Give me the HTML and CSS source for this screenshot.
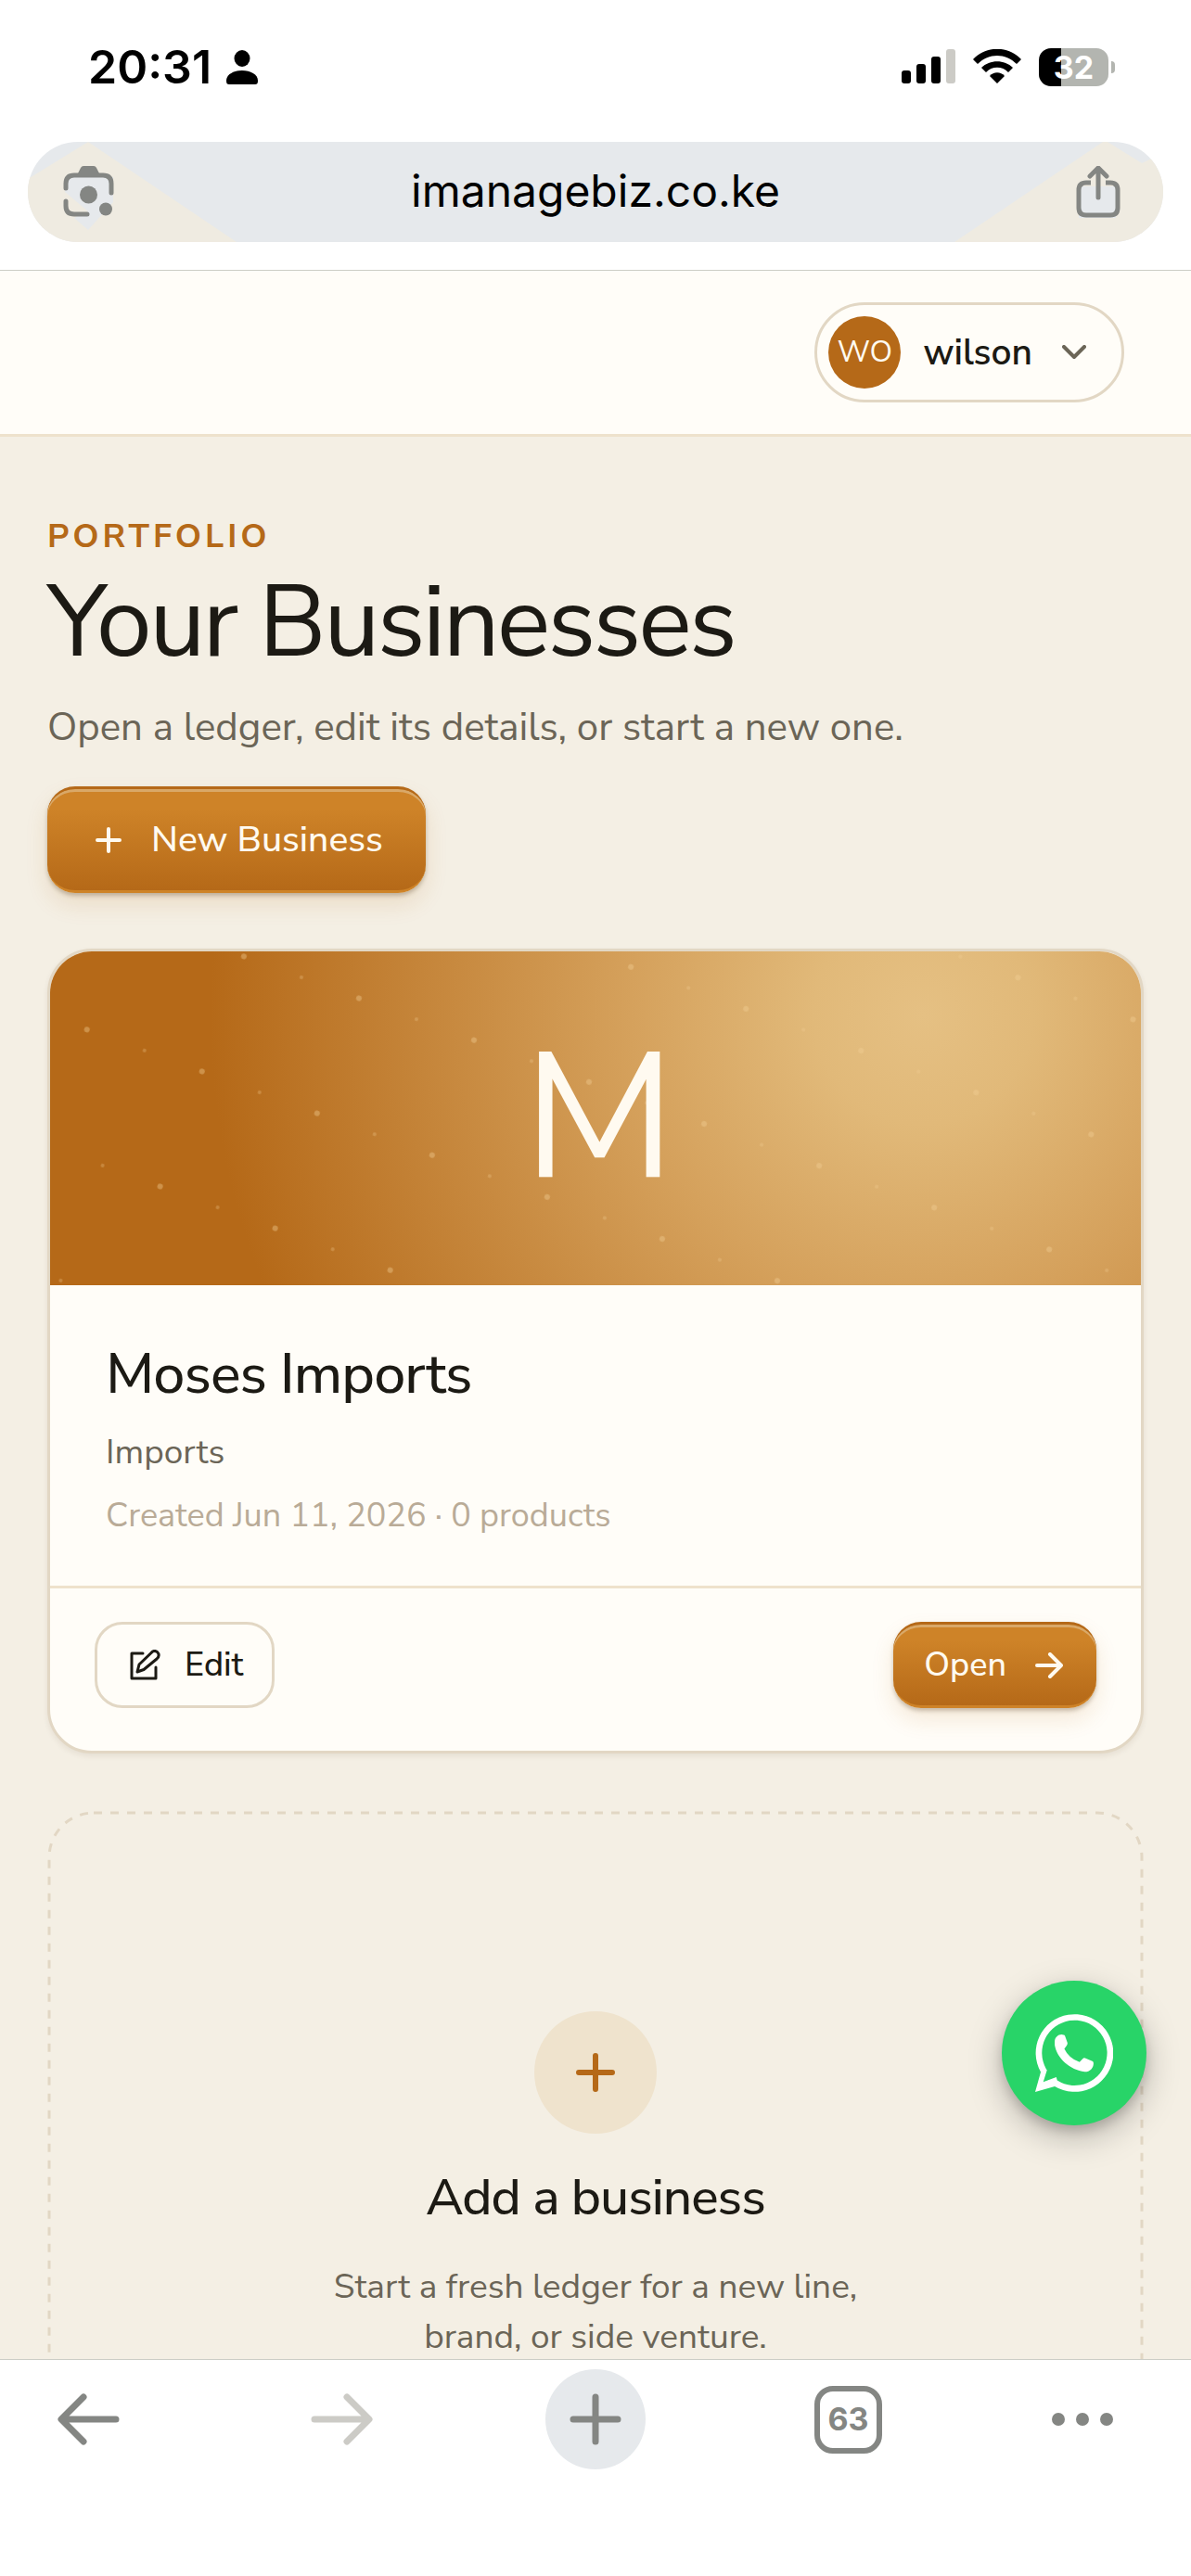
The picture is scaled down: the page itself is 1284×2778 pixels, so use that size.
FILE: index.html
```html
<!DOCTYPE html>
<html lang="en">
<head>
    <meta charset="UTF-8">
    <meta name="viewport" content="width=device-width, initial-scale=1.0">
    <title>Your Businesses</title>
    <link rel="stylesheet" href="styles.css">
</head>
<body>
    <header class="browser-top">
        <div class="status-bar">
            <div class="status-left">
                <span class="clock">20:31</span>
                <svg class="person" viewBox="0 0 34 37" aria-hidden="true">
                    <ellipse cx="17" cy="9" rx="8.5" ry="9"/>
                    <path d="M0 33C0 26 8 22 17 22s17 4 17 11c0 3-1 4-3 4H3c-2 0-3-1-3-4z"/>
                </svg>
            </div>
            <div class="status-right">
                <svg class="signal" viewBox="0 0 58 38" aria-hidden="true">
                    <rect x="0" y="23" width="10" height="14" rx="3"/>
                    <rect x="16" y="16" width="10" height="21" rx="3"/>
                    <rect x="32" y="8" width="10" height="29" rx="3"/>
                    <rect x="48" y="0" width="10" height="37" rx="3" fill="#cccbc6"/>
                </svg>
                <svg class="wifi" viewBox="0 0 52 38" aria-hidden="true">
                    <path d="M0 11C14-4 38-4 52 11l-5 5C35 4 17 4 5 16z"/>
                    <path d="M9 20c9-9 25-9 34 0l-5 5c-6-7-18-7-24 0z"/>
                    <path d="M18 29c4-5 12-5 16 0l-8 8z"/>
                </svg>
                <div class="battery"><span class="battery-level">32</span></div>
            </div>
        </div>
        <div class="url-bar">
            <svg class="tint tint-left" viewBox="0 0 225 108" aria-hidden="true">
                <path d="M65 0L0 40V108H225z"/>
                <path class="tint-gap" d="M40 38H92V65L65 95L50 82L65 75L40 54z"/>
            </svg>
            <svg class="tint tint-right" viewBox="0 0 225 108" aria-hidden="true">
                <path d="M160 0L0 108H225V12L202 23L165 0z"/>
                <path class="tint-gap" d="M134 48H174V82H134z"/>
            </svg>
            <button class="icon-btn" type="button" aria-label="Search by camera">
                <svg class="lens" viewBox="0 0 56 56">
                    <path d="M3 24V19Q3 10 12 10H43Q52 10 52 19V29M3 38V43Q3 52 12 52H26" fill="none" stroke="#848683" stroke-width="5" stroke-linecap="round"/>
                    <path d="M15 10L19 2Q20 0 22 0H33Q35 0 36 2L40 10z"/>
                    <circle cx="27.5" cy="31" r="9.5"/>
                    <circle cx="46" cy="46.500" r="7"/>
                </svg>
            </button>
            <input class="url" type="text" value="imanagebiz.co.ke" aria-label="Address">
            <button class="icon-btn" type="button" aria-label="Share">
                <svg class="share" viewBox="0 0 48 56">
                    <path d="M16 18H11Q3 18 3 26V45Q3 53 11 53H37Q45 53 45 45V26Q45 18 37 18H32" fill="none" stroke="#848683" stroke-width="5"/>
                    <path d="M24 34V3M15 11L24 2L33 11" fill="none" stroke="#848683" stroke-width="5" stroke-linecap="round" stroke-linejoin="round"/>
                </svg>
            </button>
        </div>
    </header>

    <div class="page">
        <nav class="topbar">
            <button class="user-menu" type="button">
                <span class="avatar">WO</span>
                <span class="user-name">wilson</span>
                <svg class="chevron" viewBox="0 0 26 16" aria-hidden="true">
                    <path d="M2 2L13 13L24 2"/>
                </svg>
            </button>
        </nav>

        <main class="content">
            <p class="eyebrow">Portfolio</p>
            <h1>Your Businesses</h1>
            <p class="lead">Open a ledger, edit its details, or start a new one.</p>
            <button class="btn btn-primary btn-new" type="button">
                <svg class="plus" viewBox="0 0 28 28" aria-hidden="true">
                    <path d="M14 2V26M2 14H26"/>
                </svg>
                New Business
            </button>

            <article class="card">
                <div class="cover">
                    <svg class="cover-dots" aria-hidden="true">
                        <defs>
                            <pattern id="dots" width="132" height="132" patternUnits="userSpaceOnUse" patternTransform="translate(20 42) rotate(20)">
                                <circle cx="33" cy="33" r="3" fill="#f3cf95" fill-opacity="0.4"/>
                                <circle cx="99" cy="33" r="2" fill="#f3cf95" fill-opacity="0.3"/>
                            </pattern>
                        </defs>
                        <rect width="100%" height="100%" fill="url(#dots)"/>
                    </svg>
                    <span class="cover-letter">M</span>
                </div>
                <div class="card-body">
                    <h2>Moses Imports</h2>
                    <p class="kind">Imports</p>
                    <p class="meta">Created Jun 11, 2026 · 0 products</p>
                </div>
                <div class="card-footer">
                    <button class="btn btn-outline" type="button">
                        <svg class="pencil" viewBox="0 0 33 33" aria-hidden="true">
                            <path d="M14 4H2V31H28V19M8 24L10 16L23 3.500Q26 0 29.500 2.500Q33 6 29 10L15 21.500z"/>
                        </svg>
                        Edit
                    </button>
                    <button class="btn btn-primary btn-open" type="button">
                        Open
                        <svg class="arrow" viewBox="0 0 30 28" aria-hidden="true">
                            <path d="M2 14H28M16 2L28 14L16 26"/>
                        </svg>
                    </button>
                </div>
            </article>

            <a class="add-card" href="#">
                <svg class="add-outline" aria-hidden="true">
                    <rect width="100%" height="100%" rx="48"/>
                </svg>
                <span class="add-icon">
                    <svg viewBox="0 0 42 42" aria-hidden="true">
                        <path d="M21 3V39M3 21H39"/>
                    </svg>
                </span>
                <strong class="add-title">Add a business</strong>
                <span class="add-text">Start a fresh ledger for a new line, brand, or side venture.</span>
            </a>
        </main>

        <a class="whatsapp" href="#" aria-label="Chat on WhatsApp">
            <svg viewBox="0 0 251 251">
                <path fill-rule="evenodd" d="M18 187A125 125 0 1 1 63 233L0 251zM38 181L26 219L68 203L71 214A105 105 0 1 0 35 176z"/>
                <path d="M63 88C63 76 74 66 85 66L92 67Q95 67 96 70L104 93Q105 97 102 101L94 112Q108 142 143 155L153 144Q157 140 161 142L184 152Q188 154 188 158C188 174 176 186 160 186C112 180 70 142 63 100z"/>
            </svg>
        </a>
    </div>

    <footer class="browser-bottom">
        <button class="nav-btn" type="button" aria-label="Back">
            <svg class="nav-arrow" viewBox="0 0 67 56">
                <path d="M63 28H5M28 4L4 28L28 52"/>
            </svg>
        </button>
        <button class="nav-btn" type="button" aria-label="Forward" disabled>
            <svg class="nav-arrow" viewBox="0 0 67 56">
                <path d="M4 28H62M39 4L63 28L39 52"/>
            </svg>
        </button>
        <button class="nav-btn nav-new" type="button" aria-label="New tab">
            <svg class="nav-plus" viewBox="0 0 56 56">
                <path d="M28 4V52M4 28H52"/>
            </svg>
        </button>
        <button class="nav-btn nav-tabs" type="button">63</button>
        <button class="nav-btn" type="button" aria-label="More">
            <svg class="nav-more" viewBox="0 0 68 16">
                <circle cx="8" cy="8" r="7"/>
                <circle cx="34" cy="8" r="7"/>
                <circle cx="60" cy="8" r="7"/>
            </svg>
        </button>
    </footer>
</body>
</html>
```
FILE: styles.css
```css
* {
    box-sizing: border-box;
}

body {
    margin: 0;
    height: 100vh;
    display: flex;
    flex-direction: column;
    background-color: #fff;
    color: #1c1a14;
    font-family: "Nunito Sans", Nunito, Lato, sans-serif;
    font-size: 39px;
}

button, input {
    font: inherit;
    color: inherit;
    margin: 0;
    padding: 0;
    border: none;
    background: none;
}

p, h1, h2 {
    margin: 0;
}

svg {
    display: block;
    flex-shrink: 0;
}

/* phone status bar and address bar */
.browser-top {
    padding-bottom: 30px;
    border-bottom: 1px solid #cccdc6;
    font-family: Inter, sans-serif;
}

.status-bar {
    display: flex;
    justify-content: space-between;
    align-items: center;
    padding: 42px 82px 51px 95px;
    height: 153px;
}

.status-left, .status-right {
    display: flex;
    align-items: center;
}

.status-left {
    gap: 16px;
}

.status-right {
    gap: 19px;
}

.clock {
    font-size: 50px;
    font-weight: 600;
    line-height: 60px;
    color: #000;
}

.person {
    width: 34px;
    height: 37px;
}

.signal {
    width: 58px;
    height: 38px;
}

.wifi {
    width: 52px;
    height: 38px;
}

.battery {
    display: flex;
    align-items: center;
    gap: 3px;
}

.battery-level {
    width: 75px;
    height: 41px;
    border-radius: 13px;
    background: linear-gradient(90deg, #000 32%, #b3b5b0 32%);
    color: #fff;
    font-size: 34px;
    font-weight: 700;
    line-height: 41px;
    text-align: center;
}

.battery::after {
    content: "";
    width: 4px;
    height: 13px;
    border-radius: 0 4px 4px 0;
    background-color: #b3b5b0;
}

.url-bar {
    position: relative;
    display: flex;
    align-items: center;
    justify-content: space-between;
    height: 108px;
    margin: 0 30px;
    padding: 0 38px;
    border-radius: 54px;
    background-color: #e6e9ec;
    overflow: hidden;
}

.tint {
    position: absolute;
    top: 0;
    width: 225px;
    height: 108px;
    fill: #efebe1;
}

.tint-left {
    left: 0;
}

.tint-right {
    right: 0;
}

.tint-gap {
    fill: #e6e9ec;
}

.icon-btn {
    position: relative;
    fill: #848683;
}

.lens {
    width: 56px;
    height: 56px;
}

.share {
    width: 48px;
    height: 56px;
    margin-right: 8px;
}

.url {
    flex: 1;
    min-width: 0;
    padding-bottom: 4px;
    text-align: center;
    font-size: 48px;
    color: #000;
}

/* page area */
.page {
    position: relative;
    flex: 1;
    min-height: 0;
    overflow: hidden;
    background-color: #f4efe4;
}

.topbar {
    display: flex;
    justify-content: flex-end;
    padding: 34px 72px;
    background-color: #fffdf8;
    border-bottom: 3px solid #eee2cc;
}

.user-menu {
    display: flex;
    align-items: center;
    height: 108px;
    padding: 0 38px 0 12px;
    border: 3px solid #e2d7c4;
    border-radius: 54px;
}

.avatar {
    width: 78px;
    height: 78px;
    margin-right: 24px;
    border-radius: 50%;
    background-color: #b56918;
    color: #fffaf0;
    font-size: 32px;
    line-height: 78px;
    text-align: center;
}

.user-name {
    margin-right: 32px;
    font-weight: 600;
}

.chevron {
    width: 26px;
    height: 16px;
    fill: none;
    stroke: #6b6557;
    stroke-width: 4;
    stroke-linecap: round;
    stroke-linejoin: round;
}

.content {
    padding: 78px 51px;
}

.eyebrow {
    color: #b56918;
    font-size: 36px;
    font-weight: 700;
    line-height: 60px;
    letter-spacing: 4px;
    text-transform: uppercase;
}

h1 {
    font-size: 108px;
    font-weight: 400;
    line-height: 126px;
    letter-spacing: -3px;
}

.lead {
    margin-top: 18px;
    color: #6b6557;
    font-size: 42px;
    line-height: 63px;
}

.btn {
    display: flex;
    align-items: center;
    border-radius: 30px;
    fill: none;
    stroke: currentColor;
    stroke-width: 4;
    stroke-linecap: round;
    stroke-linejoin: round;
}

.btn-primary {
    color: #fffaf0;
    background: linear-gradient(#ce8328 20%, #b56918);
    border-top: 3px solid #b56918;
    border-bottom: 3px solid #ce8328;
    font-weight: 500;
    box-shadow: inset 0 3px 0 #d9a868, 0 3px 4px rgba(60, 40, 10, 0.25), 0 12px 24px rgba(181, 105, 24, 0.14);
}

.btn-new {
    height: 115px;
    margin: 32px 0 60px;
    padding: 0 46px 0 52px;
    gap: 32px;
}

.plus {
    width: 28px;
    height: 28px;
}

.card {
    border: 3px solid #e2d7c4;
    border-radius: 48px;
    background-color: #fffdf8;
    box-shadow: 0 3px 6px rgba(60, 40, 10, 0.08);
    overflow: hidden;
}

.cover {
    position: relative;
    display: flex;
    align-items: center;
    justify-content: center;
    height: 360px;
    background: radial-gradient(circle at 80% 19%, #e5c083, #e1b979 12%, #d5a15c 32%, #b56918 78%);
}

.cover-dots {
    position: absolute;
    inset: 0;
    width: 100%;
    height: 100%;
}

.cover-letter {
    position: relative;
    padding-left: 8px;
    color: #fffaf0;
    font-size: 192px;
    font-weight: 400;
    line-height: 192px;
}

.card-body {
    padding: 54px 60px 48px;
}

h2 {
    font-size: 61px;
    font-weight: 500;
    line-height: 84px;
    letter-spacing: -1px;
}

.kind {
    margin-top: 15px;
    color: #6b6557;
    font-size: 37px;
    line-height: 54px;
}

.meta {
    margin-top: 15px;
    color: #b9ab97;
    font-size: 36px;
    line-height: 54px;
}

.card-footer {
    display: flex;
    justify-content: space-between;
    align-items: center;
    padding: 36px 48px 46px;
    border-top: 3px solid #eee2cc;
}

.btn-outline {
    height: 93px;
    padding: 0 30px 0 35px;
    gap: 26px;
    border: 3px solid #e2d7c4;
    font-size: 36px;
    font-weight: 500;
    stroke-width: 3;
}

.pencil {
    width: 33px;
    height: 33px;
}

.btn-open {
    height: 93px;
    padding: 0 36px 0 33px;
    gap: 31px;
    font-size: 36px;
}

.arrow {
    width: 30px;
    height: 28px;
}

.add-card {
    position: relative;
    display: flex;
    flex-direction: column;
    align-items: center;
    margin-top: 62px;
    padding: 216px 240px;
    color: inherit;
    text-align: center;
    text-decoration: none;
}

.add-outline {
    position: absolute;
    inset: 2px;
    width: calc(100% - 4px);
    height: calc(100% - 4px);
    fill: none;
    stroke: #e2d7c4;
    stroke-width: 3;
    stroke-dasharray: 9 9;
    overflow: visible;
}

.add-icon {
    display: flex;
    align-items: center;
    justify-content: center;
    width: 132px;
    height: 132px;
    border-radius: 50%;
    background-color: #efe3cd;
}

.add-icon svg {
    width: 42px;
    height: 42px;
    stroke: #b56918;
    stroke-width: 6;
    stroke-linecap: round;
}

.add-title {
    margin-top: 30px;
    font-size: 55px;
    font-weight: 500;
    line-height: 78px;
    letter-spacing: -1px;
}

.add-text {
    max-width: 600px;
    margin-top: 30px;
    color: #6b6557;
    font-size: 37px;
    line-height: 54px;
}

/* floating chat button */
.whatsapp {
    position: absolute;
    right: 48px;
    bottom: 252px;
    display: flex;
    align-items: center;
    justify-content: center;
    width: 156px;
    height: 156px;
    border-radius: 50%;
    background-color: #28d468;
    box-shadow: 0 12px 36px rgba(0, 0, 0, 0.25), 0 6px 12px rgba(0, 0, 0, 0.15);
}

.whatsapp svg {
    width: 84px;
    height: 84px;
    fill: #fff;
}

/* browser toolbar */
.browser-bottom {
    display: grid;
    grid-template-columns: 191fr 355fr 192fr 353fr 151fr;
    align-items: center;
    justify-items: center;
    padding: 10px 42px 115px 0;
    border-top: 1px solid #cccdc6;
    font-family: Inter, sans-serif;
}

.nav-btn {
    color: #848683;
    fill: none;
    stroke: currentColor;
    stroke-width: 7;
    stroke-linecap: round;
    stroke-linejoin: round;
}

.nav-btn:disabled {
    color: #cccbc6;
}

.nav-arrow {
    width: 67px;
    height: 56px;
}

.nav-new {
    display: flex;
    align-items: center;
    justify-content: center;
    width: 108px;
    height: 108px;
    border-radius: 50%;
    background-color: #e6e9ec;
}

.nav-plus {
    width: 56px;
    height: 56px;
}

.nav-tabs {
    width: 73px;
    height: 73px;
    border: 6px solid #848683;
    border-radius: 20px;
    font-size: 34px;
    font-weight: 700;
    line-height: 60px;
}

.nav-more {
    width: 68px;
    height: 16px;
    fill: #848683;
    stroke: none;
}
```
